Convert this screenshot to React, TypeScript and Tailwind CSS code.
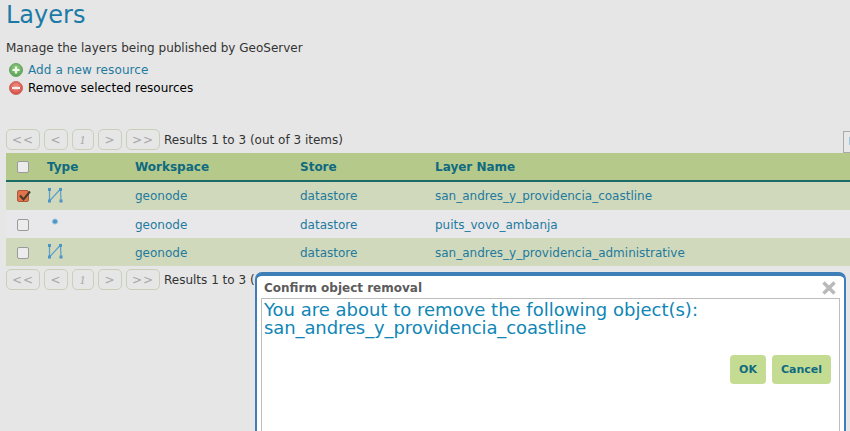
import React from 'react';

const LineIcon = () => (
  <svg width="16" height="16" viewBox="0 0 16 16" fill="none">
    <path d="M2.5 2 L2.5 14 L13.5 2 L14 14" stroke="#5b9dcb" strokeWidth="1.2" />
    <rect x="1" y="1" width="3" height="3" fill="#4f94c6" />
    <rect x="1" y="12.5" width="3" height="3" fill="#4f94c6" />
    <rect x="12" y="1" width="3" height="3" fill="#4f94c6" />
    <rect x="12.5" y="12.5" width="3" height="3" fill="#4f94c6" />
  </svg>
);

const PointIcon = () => (
  <svg width="16" height="16" viewBox="0 0 16 16" fill="none">
    <circle cx="8" cy="6.5" r="2.6" fill="#4f94c6" stroke="#9cc6e2" strokeWidth="1" />
  </svg>
);

const AddIcon = () => (
  <svg width="14" height="14" viewBox="0 0 14 14">
    <defs>
      <radialGradient id="addFill" cx="50%" cy="40%" r="60%">
        <stop offset="0%" stopColor="#a5d68f" />
        <stop offset="100%" stopColor="#4f9f4e" />
      </radialGradient>
    </defs>
    <circle cx="7" cy="7" r="6.5" fill="url(#addFill)" stroke="#6aa56a" />
    <path d="M7 3.5 V10.5 M3.5 7 H10.5" stroke="#f4f8ee" strokeWidth="2" />
  </svg>
);

const RemoveIcon = () => (
  <svg width="14" height="14" viewBox="0 0 14 14">
    <defs>
      <radialGradient id="removeFill" cx="50%" cy="40%" r="60%">
        <stop offset="0%" stopColor="#f09a8e" />
        <stop offset="100%" stopColor="#d4453e" />
      </radialGradient>
    </defs>
    <circle cx="7" cy="7" r="6.5" fill="url(#removeFill)" stroke="#c76a62" />
    <path d="M3 7 H11" stroke="#f8eeee" strokeWidth="2.2" />
  </svg>
);

const Check = ({ checked }: { checked?: boolean }) => (
  <span className={`relative block w-[12px] h-[12px] rounded-[2px] border ${checked ? 'border-[#b0583a] bg-[#e0734c]' : 'border-[#9a9a9a] bg-[#ececec]'}`}>
    {checked && (
      <svg className="absolute left-[0px] top-[-2px]" width="14" height="14" viewBox="0 0 14 14" fill="none">
        <path d="M2 6.5 L5.5 10.5 L12 2.5" stroke="#4a3a28" strokeWidth="2" />
      </svg>
    )}
  </span>
);

const PageBtn = ({ label, w, italic }: { label: string; w: string; italic?: boolean }) => (
  <span className={`flex items-center justify-center h-[21px] rounded-[5px] border border-[#c8d0b8] text-[12px] text-[#a8a8a8] tracking-[1px] ${w} ${italic ? "italic font-['Liberation_Serif',serif]" : ''}`}>
    {label}
  </span>
);

const Pager = ({ clipped }: { clipped?: boolean }) => (
  <div className="flex items-center gap-[4px] h-[21px]">
    <PageBtn label="<<" w="w-[34px]" />
    <PageBtn label="<" w="w-[24px]" />
    <PageBtn label="1" w="w-[22px]" italic />
    <PageBtn label=">" w="w-[24px]" />
    <PageBtn label=">>" w="w-[34px]" />
    <span className={`text-[12px] text-[#333] whitespace-nowrap ${clipped ? 'w-[91px] overflow-hidden' : ''}`}>Results 1 to 3 (out of 3 items)</span>
  </div>
);

const rows = [
  { icon: <LineIcon />, name: 'san_andres_y_providencia_coastline', checked: true, bg: 'bg-[#d0d9bb]', pad: '' },
  { icon: <PointIcon />, name: 'puits_vovo_ambanja', checked: false, bg: 'bg-[#e8e8ea]', pad: 'pt-[1px]' },
  { icon: <LineIcon />, name: 'san_andres_y_providencia_administrative', checked: false, bg: 'bg-[#d0d9bb]', pad: 'pt-[1px]' },
];

const cols = 'grid grid-cols-[33px_96px_165px_135px_1fr] items-center';

export default function App() {
  return (
    <div className="relative w-[850px] h-[431px] overflow-hidden bg-[#e6e6e6] font-['DejaVu_Sans',sans-serif] text-[12px] text-[#333]">
      <div className="pl-[6px]">
        <h1 className="h-[41px] text-[24px] leading-[30px] text-[#1c7ba6]">Layers</h1>
        <p className="leading-[14px] text-[#333]">Manage the layers being published by GeoServer</p>
        <div className="mt-[6px] flex items-center gap-[5px] h-[18px] pl-[3px]">
          <AddIcon />
          <span className="text-[#1f7a9e] tracking-[0.1px]">Add a new resource</span>
        </div>
        <div className="flex items-center gap-[5px] h-[18px] pl-[3px]">
          <RemoveIcon />
          <span className="text-black">Remove selected resources</span>
        </div>
        <div className="mt-[32px]"><Pager /></div>
        <div className="mt-[3px]">
          <div className={`${cols} h-[29px] bg-[#b5c98b] border-b-2 border-[#1d6b66] font-bold text-[#0f6a80]`}>
            <span className="flex justify-center"><Check /></span>
            <span className="pl-[8px]">Type</span>
            <span>Workspace</span>
            <span>Store</span>
            <span>Layer Name</span>
          </div>
          {rows.map((r) => (
            <div key={r.name} className={`${cols} h-[28px] ${r.pad} ${r.bg} text-[#1f7a9e]`}>
              <span className="flex justify-center"><Check checked={r.checked} /></span>
              <span className="pl-[8px] -mt-[3px]">{r.icon}</span>
              <span>geonode</span>
              <span>datastore</span>
              <span>{r.name}</span>
            </div>
          ))}
        </div>
        <div className="mt-[3px]"><Pager clipped /></div>
      </div>

      <div className="absolute left-[843px] top-[131px] w-[20px] h-[22px] bg-[#e8e8e8] border border-[#aaa] pl-[5px] pt-[5px]">
        <span className="block w-[3px] h-[8px] bg-[#9cc6e2]" />
      </div>

      <div className="absolute left-[255px] top-[272px] w-[591px] h-[170px] bg-white border-2 border-t-4 border-[#3f7fb8] rounded-[7px] pl-[4px] pr-[2px]">
        <div className="flex items-center justify-between h-[22px] pt-[2px]">
          <span className="font-bold text-[12px] text-[#5c5c5c] pl-[3px]">Confirm object removal</span>
          <svg width="16" height="16" viewBox="0 0 16 16" className="mr-[5px]">
            <path d="M2.5 2.5 L13.5 13.5 M13.5 2.5 L2.5 13.5" stroke="#b9b9b9" strokeWidth="3.5" />
          </svg>
        </div>
        <div className="h-[160px] border border-[#bdbdbd] pl-[2px] pr-[8px] mr-[2px] text-[18px] leading-[18px] text-[#0f86b5]">
          <div className="pt-[2px]">You are about to remove the following object(s):</div>
          <div className="tracking-[-0.1px]">san_andres_y_providencia_coastline</div>
          <div className="flex justify-end gap-[6px] mt-[18px]">
            <span className="flex items-center justify-center w-[36px] h-[29px] rounded-[4px] bg-[#c4dc92] text-[11px] font-bold text-[#106b80]">OK</span>
            <span className="flex items-center justify-center w-[59px] h-[29px] rounded-[4px] bg-[#c4dc92] text-[11px] font-bold text-[#106b80]">Cancel</span>
          </div>
        </div>
      </div>
    </div>
  );
}
